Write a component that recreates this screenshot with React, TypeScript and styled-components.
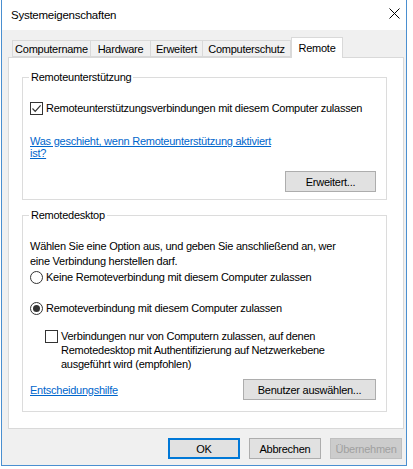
import * as React from "react";
import styled, { createGlobalStyle } from "styled-components";

const GlobalStyle = createGlobalStyle`
  body {
    margin: 0;
    background: #fff;
    font-family: "Liberation Sans", Arial, sans-serif;
    font-size: 11px;
    letter-spacing: -0.25px;
    color: #000;
  }
`;

const Window = styled.div`
  margin-left: 1px;
  width: 406px;
  height: 466px;
  border: 1px solid #4a8fd0;
  border-top: none;
  background: #f0f0f0;
  display: flex;
  flex-direction: column;
  box-sizing: border-box;
`;

const TitleBar = styled.div`
  height: 30px;
  flex: none;
  background: #fff;
  display: flex;
  align-items: center;
  justify-content: space-between;
  padding: 0 4px 0 9px;
`;

const Title = styled.span`
  font-size: 11.5px;
  line-height: 15px;
`;

const CloseBtn = styled.span`
  display: flex;
  width: 11px;
  height: 11px;
  margin: -3px 2px 0 0;
`;

const Body = styled.div`
  padding: 7px 2px 0 6px;
  display: flex;
  flex-direction: column;
`;

const TabRow = styled.div`
  display: flex;
  align-items: flex-end;
  height: 20px;
  padding-left: 4px;
`;

const Tab = styled.div<{ $w: number; $active?: boolean }>`
  width: ${(p) => p.$w}px;
  height: ${(p) => (p.$active ? 21 : 17)}px;
  box-sizing: border-box;
  border: 1px solid #d9d9d9;
  border-bottom: ${(p) => (p.$active ? "none" : "1px solid #d9d9d9")};
  border-left: ${(p) => (p.$active ? "1px solid #d9d9d9" : "none")};
  background: ${(p) => (p.$active ? "#fff" : "#f0f0f0")};
  margin-bottom: ${(p) => (p.$active ? -1 : 0)}px;
  position: relative;
  z-index: ${(p) => (p.$active ? 1 : 0)};
  display: flex;
  align-items: ${(p) => (p.$active ? "flex-start" : "center")};
  padding-top: ${(p) => (p.$active ? 3 : 0)}px;
  justify-content: center;
  line-height: 14px;
  &:first-child {
    border-left: 1px solid #d9d9d9;
  }
`;

const Panel = styled.div`
  width: 396px;
  height: 372px;
  box-sizing: border-box;
  border: 1px solid #d9d9d9;
  background: #fff;
  padding: 12px 0 0 13px;
`;

const Group = styled.fieldset<{ $gap?: number }>`
  margin: ${(p) => p.$gap || 0}px 0 0 0;
  width: 365px;
  box-sizing: border-box;
  border: 1px solid #dcdcdc;
  padding: 0 10px 0 7px;
`;

const Legend = styled.legend`
  padding: 0 2px;
  margin-left: -1px;
  line-height: 15px;
`;

const Row = styled.div<{ $top: number; $indent?: number }>`
  display: flex;
  align-items: flex-start;
  margin-top: ${(p) => p.$top}px;
  margin-left: ${(p) => p.$indent || 0}px;
  line-height: 14px;
  white-space: nowrap;
`;

const CheckBox = styled.span`
  width: 13px;
  height: 13px;
  flex: none;
  box-sizing: border-box;
  border: 1px solid #333;
  background: #fff;
  margin: 1px 3px 0 0;
  display: flex;
  align-items: center;
  justify-content: center;
`;

const Radio = styled.span<{ $checked?: boolean }>`
  width: 13px;
  height: 13px;
  flex: none;
  box-sizing: border-box;
  border: 1px solid #333;
  border-radius: 50%;
  background: #fff;
  margin: 1px 3px 0 0;
  display: flex;
  align-items: center;
  justify-content: center;
  &::after {
    content: "";
    display: ${(p) => (p.$checked ? "block" : "none")};
    width: 7px;
    height: 7px;
    border-radius: 50%;
    background: #333;
  }
`;

const Link = styled.a`
  color: #0066cc;
  text-decoration: underline;
  cursor: pointer;
`;

const LinkBlock = styled.div<{ $top: number }>`
  margin-top: ${(p) => p.$top}px;
  line-height: 12px;
  white-space: nowrap;
`;

const Para = styled.div<{ $top: number }>`
  margin-top: ${(p) => p.$top}px;
  line-height: 15px;
  white-space: nowrap;
`;

const ButtonRow = styled.div<{ $top: number; $bottom: number; $split?: boolean }>`
  display: flex;
  align-items: center;
  justify-content: ${(p) => (p.$split ? "space-between" : "flex-end")};
  margin-top: ${(p) => p.$top}px;
  padding-bottom: ${(p) => p.$bottom}px;
`;

const Button = styled.button<{ $w: number; $focus?: boolean }>`
  width: ${(p) => p.$w}px;
  height: 21px;
  box-sizing: border-box;
  background: #e1e1e1;
  border: ${(p) => (p.$focus ? "2px solid #0078d7" : "1px solid #adadad")};
  font-family: "Liberation Sans", Arial, sans-serif;
  font-size: 11px;
  letter-spacing: -0.25px;
  color: #000;
  padding: 0;
  &:disabled {
    background: #cccccc;
    border-color: #bfbfbf;
    color: #a0a0a0;
  }
`;

const Footer = styled.div`
  display: flex;
  justify-content: flex-end;
  gap: 9px;
  margin-top: 9px;
  padding-right: 2px;
`;

const tabs = [
  { label: "Computername", w: 79 },
  { label: "Hardware", w: 60 },
  { label: "Erweitert", w: 52 },
  { label: "Computerschutz", w: 88 },
  { label: "Remote", w: 52, active: true },
];

export default function App() {
  return (
    <>
      <GlobalStyle />
      <Window>
        <TitleBar>
          <Title>Systemeigenschaften</Title>
          <CloseBtn>
            <svg width="11" height="11" viewBox="0 0 11 11">
              <path d="M0.5 0.5 L10.5 10.5 M10.5 0.5 L0.5 10.5" stroke="#000" strokeWidth="1" fill="none" />
            </svg>
          </CloseBtn>
        </TitleBar>
        <Body>
          <TabRow>
            {tabs.map((t) => (
              <Tab key={t.label} $w={t.w} $active={t.active}>
                {t.label}
              </Tab>
            ))}
          </TabRow>
          <Panel>
            <Group>
              <Legend>Remoteunterstützung</Legend>
              <Row $top={16}>
                <CheckBox>
                  <svg width="11" height="11" viewBox="0 0 11 11">
                    <path d="M1.5 5.5 L4.2 8.3 L9.6 2.3" stroke="#333" strokeWidth="1.2" fill="none" />
                  </svg>
                </CheckBox>
                Remoteunterstützungsverbindungen mit diesem Computer zulassen
              </Row>
              <LinkBlock $top={20}>
                <Link>
                  Was geschieht, wenn Remoteunterstützung aktiviert
                  <br />
                  ist?
                </Link>
              </LinkBlock>
              <ButtonRow $top={12} $bottom={7}>
                <Button $w={91}>Erweitert...</Button>
              </ButtonRow>
            </Group>
            <Group $gap={8}>
              <Legend>Remotedesktop</Legend>
              <Para $top={16}>
                Wählen Sie eine Option aus, und geben Sie anschließend an, wer
                <br />
                eine Verbindung herstellen darf.
              </Para>
              <Row $top={1}>
                <Radio />
                Keine Remoteverbindung mit diesem Computer zulassen
              </Row>
              <Row $top={17}>
                <Radio $checked />
                Remoteverbindung mit diesem Computer zulassen
              </Row>
              <Row $top={14} $indent={15}>
                <CheckBox />
                <span>
                  Verbindungen nur von Computern zulassen, auf denen
                  <br />
                  Remotedesktop mit Authentifizierung auf Netzwerkebene
                  <br />
                  ausgeführt wird (empfohlen)
                </span>
              </Row>
              <ButtonRow $top={8} $bottom={11} $split>
                <Link>Entscheidungshilfe</Link>
                <Button $w={133}>Benutzer auswählen...</Button>
              </ButtonRow>
            </Group>
          </Panel>
          <Footer>
            <Button $w={72} $focus>
              OK
            </Button>
            <Button $w={72}>Abbrechen</Button>
            <Button $w={72} disabled>
              Übernehmen
            </Button>
          </Footer>
        </Body>
      </Window>
    </>
  );
}
